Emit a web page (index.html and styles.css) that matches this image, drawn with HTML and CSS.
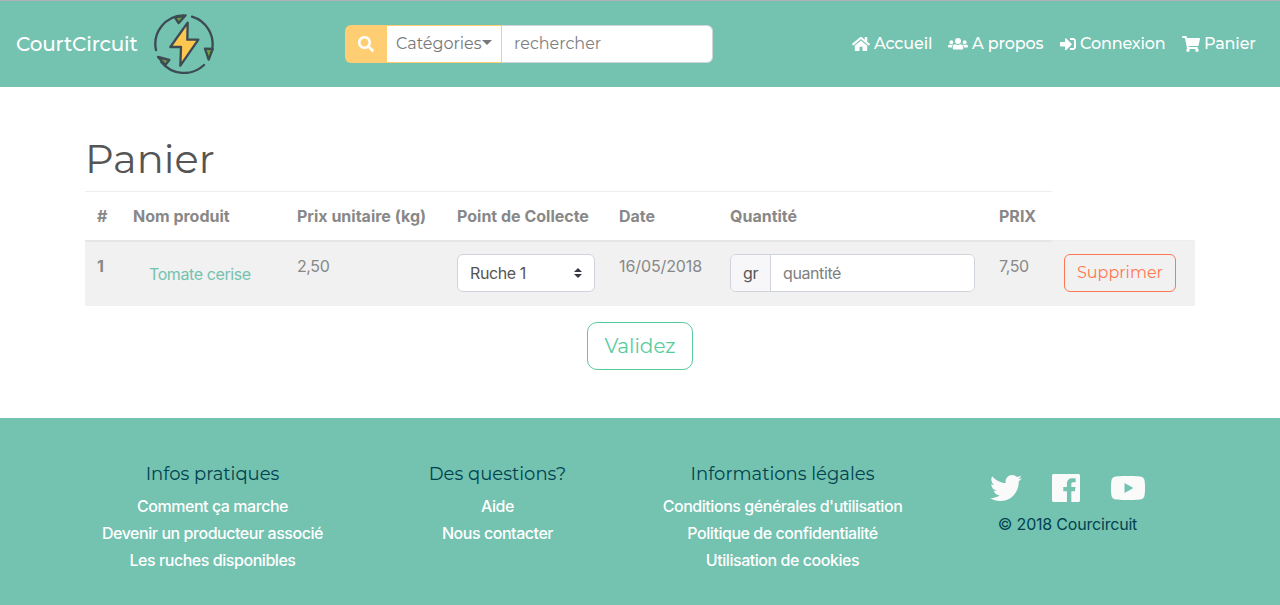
FILE: index.html
```html
<!DOCTYPE html>
<html lang="fr">
<head>
<meta charset="utf-8">
<title>CourtCircuit - Panier</title>
<link rel="stylesheet" href="styles.css">
</head>
<body>
<header class="navbar">
  <a class="brand"><span class="brand-name">CourtCircuit</span>
    <svg class="logo" viewBox="0 0 180 180" fill="none" stroke="#3d4b54" stroke-width="7" stroke-linecap="round" stroke-linejoin="round">
      <path d="M6 108A86 86 0 0 1 88 4"/>
      <path d="M114 8A86 86 0 0 1 174 108"/>
      <path d="M150 153A87 87 0 0 1 22 144"/>
      <g fill="#6ea03c"><path d="M95 4L63 11L74 27Z"/><path d="M153 104L176 105L164 137Z"/><path d="M12 129L46 138L34 153Z"/></g>
      <path fill="#fdc74f" d="M101 26L49 99H81L79 155L133 77H100Z"/>
    </svg>
  </a>
  <form class="search">
    <span class="search-icon"><svg viewBox="0 0 512 512"><path d="M505 442.7L405.3 343c-4.5-4.5-10.6-7-17-7H372c27.6-35.3 44-79.7 44-128C416 93.1 322.9 0 208 0S0 93.1 0 208s93.1 208 208 208c48.3 0 92.7-16.4 128-44v16.3c0 6.4 2.5 12.5 7 17l99.7 99.7c9.4 9.4 24.6 9.4 33.9 0l28.3-28.3c9.4-9.4 9.4-24.6.1-34zM208 336c-70.7 0-128-57.2-128-128 0-70.7 57.2-128 128-128 70.7 0 128 57.2 128 128 0 70.7-57.2 128-128 128z"/></svg></span>
    <span class="categories"><span>Catégories</span><i class="caret"></i></span>
    <input class="search-input" type="text" placeholder="rechercher">
  </form>
  <nav class="links">
    <a class="link home"><svg viewBox="0 0 576 512"><path d="M488 312.7V456c0 13.3-10.7 24-24 24H348c-6.6 0-12-5.4-12-12V356c0-6.6-5.4-12-12-12h-72c-6.6 0-12 5.4-12 12v112c0 6.6-5.4 12-12 12H112c-13.3 0-24-10.7-24-24V312.7c0-3.6 1.6-7 4.4-9.3l188-154.8c4.4-3.6 10.8-3.6 15.3 0l188 154.8c2.7 2.3 4.3 5.7 4.3 9.3zm83.6-60.9L488 182.9V44.4c0-6.6-5.4-12-12-12h-56c-6.6 0-12 5.4-12 12V117l-89.5-73.7c-17.7-14.6-43.3-14.6-61 0L4.4 251.8c-5.1 4.2-5.8 11.8-1.6 16.9l25.5 31c4.2 5.1 11.8 5.8 16.9 1.6l235.2-193.7c4.4-3.6 10.8-3.6 15.3 0l235.2 193.7c5.1 4.2 12.7 3.5 16.9-1.6l25.5-31c4.2-5.2 3.4-12.7-1.7-16.9z"/></svg><span>Accueil</span></a>
    <a class="link about"><svg viewBox="0 0 640 512"><circle cx="320" cy="160" r="96"/><circle cx="108" cy="196" r="62"/><circle cx="532" cy="196" r="62"/><path d="M250 265c42 28 98 28 140 0 58 0 98 38 98 88v47c0 20-14 34-34 34H186c-20 0-34-14-34-34v-47c0-50 40-88 98-88zM64 268c28 16 62 16 88 0l28 5c-36 22-52 50-52 95H26c-16 0-26-10-26-26v-15c0-34 26-59 64-59zM576 268c-28 16-62 16-88 0l-28 5c36 22 52 50 52 95h102c16 0 26-10 26-26v-15c0-34-26-59-64-59z"/></svg><span>A propos</span></a>
    <a class="link login"><svg viewBox="0 0 512 512"><path d="M416 448h-84c-6.6 0-12-5.4-12-12v-40c0-6.6 5.4-12 12-12h84c17.7 0 32-14.3 32-32V160c0-17.7-14.3-32-32-32h-84c-6.6 0-12-5.4-12-12V76c0-6.6 5.4-12 12-12h84c53 0 96 43 96 96v192c0 53-43 96-96 96zm-47-201L201 79c-15-15-41-4.5-41 17v96H24c-13.3 0-24 10.7-24 24v96c0 13.3 10.7 24 24 24h136v96c0 21.5 26 32 41 17l168-168c9.3-9.4 9.3-24.6 0-34z"/></svg><span>Connexion</span></a>
    <a class="link cart"><svg viewBox="0 0 576 512"><path d="M528.12 301.319l47.273-208C578.806 78.301 567.391 64 551.99 64H159.208l-9.166-44.81C147.758 8.021 137.93 0 126.529 0H24C10.745 0 0 10.745 0 24v16c0 13.255 10.745 24 24 24h69.883l70.248 343.435C147.325 417.1 136 435.222 136 456c0 30.928 25.072 56 56 56s56-25.072 56-56c0-15.674-6.447-29.835-16.824-40h209.647C430.447 426.165 424 440.326 424 456c0 30.928 25.072 56 56 56s56-25.072 56-56c0-22.172-12.888-41.332-31.579-50.405l5.517-24.276c3.413-15.018-8.002-29.319-23.403-29.319H218.117l-6.545-32h293.145c11.206 0 20.92-7.754 23.403-18.681z"/></svg><span>Panier</span></a>
  </nav>
</header>

<main class="container">
  <h1>Panier</h1>
  <table class="table">
    <colgroup><col class="c-num"><col class="c-name"><col class="c-unit"><col class="c-point"><col class="c-date"><col class="c-qty"><col class="c-price"><col class="c-action"></colgroup>
    <thead>
      <tr><th>#</th><th>Nom produit</th><th>Prix unitaire (kg)</th><th>Point de Collecte</th><th>Date</th><th>Quantité</th><th>PRIX</th></tr>
    </thead>
    <tbody>
      <tr>
        <th>1</th>
        <td><a class="product">Tomate cerise</a></td>
        <td>2,50</td>
        <td><div class="select"><span>Ruche 1</span><svg viewBox="0 0 8 10"><path d="M4 0L8 4H0ZM0 6H8L4 10Z"/></svg></div></td>
        <td class="date">16/05/2018</td>
        <td><div class="quantity"><span class="unit">gr</span><input type="text" placeholder="quantité"></div></td>
        <td>7,50</td>
        <td class="action"><button class="btn btn-danger">Supprimer</button></td>
      </tr>
    </tbody>
  </table>
  <button class="btn btn-submit">Validez</button>
</main>

<footer class="footer">
  <div class="footer-row">
    <section><h5>Infos pratiques</h5><a>Comment ça marche</a><a>Devenir un producteur associé</a><a>Les ruches disponibles</a></section>
    <section><h5>Des questions?</h5><a>Aide</a><a>Nous contacter</a></section>
    <section><h5>Informations légales</h5><a>Conditions générales d'utilisation</a><a>Politique de confidentialité</a><a>Utilisation de cookies</a></section>
    <section class="social-col">
      <div class="social">
        <svg class="twitter" viewBox="0 0 512 512"><path d="M459.37 151.716c.325 4.548.325 9.097.325 13.645 0 138.72-105.583 298.558-298.558 298.558-59.452 0-114.68-17.219-161.137-47.106 8.447.974 16.568 1.299 25.34 1.299 49.055 0 94.213-16.568 130.274-44.832-46.132-.975-84.792-31.188-98.112-72.772 6.498.974 12.995 1.624 19.818 1.624 9.421 0 18.843-1.3 27.614-3.573-48.081-9.747-84.143-51.98-84.143-102.985v-1.299c13.969 7.797 30.214 12.67 47.431 13.319-28.264-18.843-46.781-51.005-46.781-87.391 0-19.492 5.197-37.36 14.294-52.954 51.655 63.675 129.3 105.258 216.365 109.807-1.624-7.797-2.599-15.918-2.599-24.04 0-57.828 46.782-104.934 104.934-104.934 30.213 0 57.502 12.67 76.67 33.137 23.715-4.548 46.456-13.32 66.599-25.34-7.798 24.366-24.366 44.833-46.132 57.827 21.117-2.273 41.584-8.122 60.426-16.243-14.292 20.791-32.161 39.308-52.628 54.253z"/></svg>
        <svg class="facebook" viewBox="0 0 448 512"><path d="M448 56.7v398.5c0 13.7-11.1 24.7-24.7 24.7H309.1V306.5h58.2l8.7-67.6h-67v-43.2c0-19.6 5.4-32.9 33.5-32.9h35.8v-60.5c-6.2-.8-27.4-2.7-52.2-2.7-51.6 0-87 31.5-87 89.4v49.9h-58.4v67.6h58.4V480H24.7C11.1 480 0 468.9 0 455.3V56.7C0 43.1 11.1 32 24.7 32h398.5c13.7 0 24.8 11.1 24.8 24.7z"/></svg>
        <svg class="youtube" viewBox="0 0 576 512"><path d="M549.655 124.083c-6.281-23.65-24.787-42.276-48.284-48.597C458.781 64 288 64 288 64S117.22 64 74.629 75.486c-23.497 6.322-42.003 24.947-48.284 48.597-11.412 42.867-11.412 132.305-11.412 132.305s0 89.438 11.412 132.305c6.281 23.65 24.787 41.5 48.284 47.821C117.22 448 288 448 288 448s170.78 0 213.371-11.486c23.497-6.321 42.003-24.171 48.284-47.821 11.412-42.867 11.412-132.305 11.412-132.305s0-89.438-11.412-132.305zm-317.51 213.508V175.185l142.739 81.205-142.739 81.201z"/></svg>
      </div>
      <p>© 2018 Courcircuit</p>
    </section>
  </div>
</footer>
</body>
</html>
```
FILE: styles.css
```css
* { box-sizing: border-box; }

body {
  margin: 0;
  background: #fff;
  color: #888;
  font: 400 16px/24px Inter, "Liberation Sans", sans-serif;
  letter-spacing: -0.4px;
}

svg { display: block; fill: currentColor; flex: none; }
input, button { font: inherit; letter-spacing: inherit; margin: 0; }

.navbar, h1, h5, .btn, .search-input {
  font-family: Montserrat, Inter, sans-serif;
  letter-spacing: 0;
}

.navbar {
  display: flex;
  align-items: center;
  height: 87px;
  padding: 0 24px 0 16px;
  border-top: 1px solid #b0b0b5;
  background: #74c2b0;
  color: #fff;
}

.brand { display: flex; align-items: center; width: 329px; font-size: 20px; font-weight: 500; }
.brand-name { width: 138px; letter-spacing: -0.15px; }
.logo { width: 60px; height: 60px; fill: none; }

.search {
  display: flex;
  width: 368px;
  height: 38px;
  color: #777;
}
.search-icon {
  display: flex;
  align-items: center;
  justify-content: center;
  width: 42px;
  border-radius: 6px 0 0 6px;
  background: #ffce73;
  color: #fff;
}
.search-icon svg { width: 16px; height: 16px; }
.categories {
  display: flex;
  align-items: center;
  width: 115px;
  padding-left: 9px;
  border: 1px solid #ffce73;
  border-left: 0;
  background: #fff;
}
.caret {
  margin-top: -3px;
  border: 5px solid transparent;
  border-top-color: #777;
  border-bottom: 0;
}
.search-input {
  flex: 1;
  min-width: 0;
  padding: 0 12px;
  border: 1px solid #ced4da;
  border-left: 0;
  border-radius: 0 6px 6px 0;
  background: #fff;
}
::placeholder { color: #808080; opacity: 1; }

.links { display: flex; gap: 16px; margin-left: auto; font-weight: 500; letter-spacing: -0.15px; }
.link { display: flex; align-items: center; gap: 4px; white-space: nowrap; }
.link svg { height: 16px; }
.home { width: 80px; }
.about { width: 96px; }
.login { width: 106px; }
.cart { width: 74px; }
.home svg, .cart svg { width: 18px; }
.about svg { width: 20px; }
.login svg { width: 16px; }

.container { width: 1110px; height: 331px; margin: 0 auto; padding-top: 48px; }

h1 {
  margin: 0;
  height: 56px;
  color: #555;
  font-size: 40px;
  font-weight: 400;
  line-height: 48px;
}

.table { width: 1110px; table-layout: fixed; border-collapse: collapse; }
.c-num { width: 36px; }
.c-name { width: 164px; }
.c-unit { width: 160px; }
.c-point { width: 162px; }
.c-date { width: 111px; }
.c-qty { width: 269px; }
.c-price { width: 65px; }
.c-action { width: 143px; }
th, td { padding: 12px; border-top: 1px solid #eee; text-align: left; vertical-align: top; white-space: nowrap; }
th { font-weight: 700; letter-spacing: 0; }
thead th { height: 49px; padding-bottom: 11px; border-bottom: 2px solid #e6e6e6; }
tbody tr { height: 65px; background: #f1f1f1; }
td.date { letter-spacing: -0.1px; }
td.action { padding-top: 13px; }

.product { display: block; padding: 8px 16px; color: #74c2b0; }
.select, .quantity { display: flex; height: 38px; border: 1px solid #ced4da; border-radius: 6px; background: #fff; color: #555; overflow: hidden; }
.select { align-items: center; justify-content: space-between; padding: 0 12px; }
.select svg { width: 8px; height: 10px; color: #343a40; }
.quantity { width: 245px; }
.unit { width: 40px; padding: 6px 12px; border-right: 1px solid #ced4da; background: #f7f7f9; }
.quantity input { flex: 1; min-width: 0; border: 0; padding: 0 12px; }

.btn { display: block; border: 1px solid; background: transparent; }
.btn-danger { width: 112px; height: 38px; padding: 0; border-radius: 6px; color: #ff7851; }
.btn-submit { width: 106px; height: 48px; margin: 16px auto 0; padding: 0; border-radius: 10px; color: #56cc9d; font-size: 20px; }

.footer { height: 187px; padding-top: 45px; background: #74c2b0; }
.footer-row { display: grid; grid-template-columns: repeat(4, 285px); justify-content: center; text-align: center; }
h5 { margin: 0 0 8px; color: #00424f; font-size: 18px; font-weight: 400; line-height: 22px; }
.footer a { display: block; height: 27px; color: #fff; font-weight: 500; line-height: 27px; letter-spacing: -0.45px; white-space: nowrap; }
.social { display: flex; justify-content: center; gap: 30px; height: 49px; padding-top: 1px; align-items: center; color: #fafafa; }
.social svg { height: 32px; }
.twitter { width: 32px; }
.facebook { width: 28px; }
.youtube { width: 36px; }
.social-col p { margin: 0; color: #00424f; letter-spacing: -0.2px; }
```
